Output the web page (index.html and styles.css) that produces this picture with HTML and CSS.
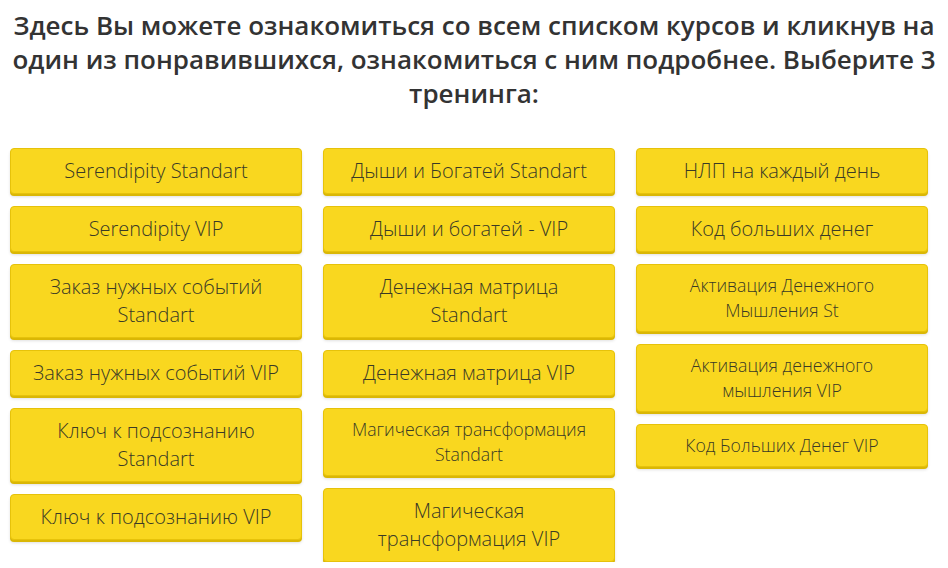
FILE: index.html
```html
<!DOCTYPE html>
<html lang="ru">
<head>
<meta charset="utf-8">
<link rel="stylesheet" href="styles.css">
</head>
<body>
<h1 class="title">Здесь Вы можете ознакомиться со всем списком курсов и кликнув на один из понравившихся, ознакомиться с ним подробнее. Выберите 3 тренинга:</h1>
<div class="grid">
  <div class="col">
    <a class="btn">Serendipity Standart</a>
    <a class="btn">Serendipity VIP</a>
    <a class="btn">Заказ нужных событий Standart</a>
    <a class="btn">Заказ нужных событий VIP</a>
    <a class="btn">Ключ к подсознанию Standart</a>
    <a class="btn">Ключ к подсознанию VIP</a>
  </div>
  <div class="col">
    <a class="btn">Дыши и Богатей Standart</a>
    <a class="btn">Дыши и богатей - VIP</a>
    <a class="btn">Денежная матрица Standart</a>
    <a class="btn">Денежная матрица VIP</a>
    <a class="btn small">Магическая трансформация Standart</a>
    <a class="btn">Магическая трансформация VIP</a>
  </div>
  <div class="col">
    <a class="btn">НЛП на каждый день</a>
    <a class="btn">Код больших денег</a>
    <a class="btn small">Активация Денежного Мышления St</a>
    <a class="btn small">Активация денежного мышления VIP</a>
    <a class="btn small">Код Больших Денег VIP</a>
  </div>
</div>
</body>
</html>
```
FILE: styles.css
```css
html, body {
  margin: 0;
  padding: 0;
  background: #ffffff;
}
body {
  font-family: "Open Sans", "DejaVu Sans", sans-serif;
  color: #333333;
}
.title {
  margin: 0;
  padding: 8px 10px 0;
  font-size: 26px;
  font-weight: 600;
  line-height: 34px;
  text-align: center;
  color: #333333;
}
.grid {
  display: grid;
  grid-template-columns: 292px 292px 292px;
  column-gap: 21px;
  padding: 38px 0 0 10px;
  align-items: start;
}
.col {
  display: flex;
  flex-direction: column;
  gap: 12px;
}
.btn {
  display: block;
  box-sizing: border-box;
  background: #f9d71f;
  border: 1px solid #e6c20a;
  border-radius: 4px;
  box-shadow: 0 2px 0 #dab705, 0 3px 3px rgba(0,0,0,0.12);
  padding: 8px 20px;
  font-size: 20px;
  font-weight: 300;
  line-height: 28px;
  text-align: center;
  color: #3a3a26;
}
.btn.small {
  font-size: 17.7px;
  line-height: 25px;
}
```
